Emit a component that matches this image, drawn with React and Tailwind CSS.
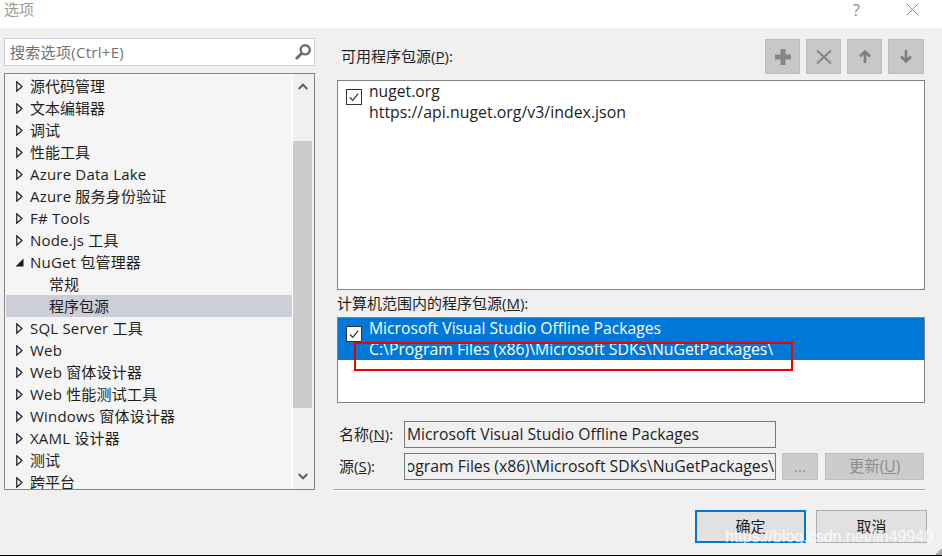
import React from "react";

const treeItems = [
  { label: "源代码管理" },
  { label: "文本编辑器" },
  { label: "调试" },
  { label: "性能工具" },
  { label: "Azure Data Lake" },
  { label: "Azure 服务身份验证" },
  { label: "F# Tools" },
  { label: "Node.js 工具" },
  { label: "NuGet 包管理器", open: true },
  { label: "常规", child: true },
  { label: "程序包源", child: true, selected: true },
  { label: "SQL Server 工具" },
  { label: "Web" },
  { label: "Web 窗体设计器" },
  { label: "Web 性能测试工具" },
  { label: "Windows 窗体设计器" },
  { label: "XAML 设计器" },
  { label: "测试" },
  { label: "跨平台" },
];

const Arrow = ({ open }) =>
  open ? (
    <svg width="9" height="9" viewBox="0 0 9 9" className="shrink-0">
      <path d="M8.5 0.5V8.5H0.5Z" fill="#1e1e1e" />
    </svg>
  ) : (
    <svg width="7" height="11" viewBox="0 0 7 11" className="shrink-0">
      <path d="M0.75 0.75V10.25L6 5.5Z" fill="none" stroke="#1e1e1e" strokeWidth="1.2" />
    </svg>
  );

const TreeRow = ({ item }) => (
  <div
    className={`h-[22px] shrink-0 flex items-center whitespace-nowrap text-[15px] text-[#1e1e1e] ${
      item.selected ? "bg-[#ccced9]" : ""
    } ${item.child ? "pl-[43px]" : item.open ? "pl-[9px]" : "pl-[10px]"} ${
      /[A-Za-z]/.test(item.label) ? "tracking-[0.2px]" : ""
    }`}
  >
    {!item.child && <Arrow open={item.open} />}
    <span className={item.child ? "" : item.open ? "ml-[6px]" : "ml-[7px]"}>{item.label}</span>
  </div>
);

const Check = () => (
  <div className="w-[16px] h-[16px] border border-[#333333] bg-white flex items-center justify-center shrink-0">
    <svg width="12" height="12" viewBox="0 0 12 12">
      <path d="M2 6.5L4.8 9.3L10.2 2.6" fill="none" stroke="#333333" strokeWidth="1.2" />
    </svg>
  </div>
);

const ToolButton = ({ wide, children }) => (
  <div
    className={`h-[35px] bg-[#c8c8c8] border border-[#bdbdbd] flex items-center justify-center ${
      wide ? "w-[36px]" : "w-[35px]"
    }`}
  >
    {children}
  </div>
);

const Underline = ({ children }) => <span className="underline">{children}</span>;

export default function App() {
  return (
    <div
      className="relative w-[942px] h-[556px] overflow-hidden bg-[#f0f0f0] flex flex-col text-[15px] text-[#1e1e1e] border-b border-black"
      style={{ fontFamily: '"Open Sans", "Noto Sans CJK SC", sans-serif' }}
    >
      {/* title bar */}
      <div className="h-[28px] shrink-0 bg-white flex items-center pl-[4px] pr-[23px] justify-between">
        <span className="text-[15px] text-[#999999] -mt-[10px]">选项</span>
        <div className="flex items-center gap-[46px] -mt-[9px]">
          <span className="text-[16px] text-[#8c8c8c]">?</span>
          <svg width="13" height="13" viewBox="0 0 13 13">
            <path d="M0.5 0.5L12.5 12.5M12.5 0.5L0.5 12.5" stroke="#8a8a8a" strokeWidth="1" />
          </svg>
        </div>
      </div>

      <div className="flex flex-1 min-h-0">
        {/* left column */}
        <div className="w-[311px] ml-[4px] pt-[10px] flex flex-col shrink-0">
          <div className="h-[28px] bg-white border border-[#ccceDB] flex items-center justify-between pl-[5px] pr-[2px] shrink-0">
            <span className="text-[15px] text-[#717171] tracking-[0.3px]">搜索选项(Ctrl+E)</span>
            <svg width="18" height="18" viewBox="0 0 18 18">
              <circle cx="11.2" cy="6.8" r="4.6" fill="none" stroke="#6e6e6e" strokeWidth="2.4" />
              <path d="M7.5 10.5L2 16" stroke="#6e6e6e" strokeWidth="3" />
            </svg>
          </div>
          <div className="mt-[7px] h-[417px] border border-[#82828c] bg-[#f5f5f5] flex overflow-hidden shrink-0">
            <div className="flex-1 min-w-0 flex flex-col pt-[1px] pl-[1px] overflow-hidden">
              {treeItems.map((item) => (
                <TreeRow key={item.label} item={item} />
              ))}
            </div>
            <div className="w-[22px] bg-[#f0f0f0] border-l border-white flex flex-col shrink-0">
              <div className="h-[67px] flex justify-center pt-[9px] pr-[2px]">
                <svg width="10" height="7" viewBox="0 0 10 7">
                  <path d="M0.7 6L5 1.7L9.3 6" fill="none" stroke="#606060" strokeWidth="2" />
                </svg>
              </div>
              <div className="h-[267px] bg-[#cccccc] mr-[2px]"></div>
              <div className="flex-1 flex justify-center items-end pb-[9px] pr-[2px]">
                <svg width="10" height="7" viewBox="0 0 10 7">
                  <path d="M0.7 1L5 5.3L9.3 1" fill="none" stroke="#606060" strokeWidth="2" />
                </svg>
              </div>
            </div>
          </div>
        </div>

        {/* right column */}
        <div className="flex-1 min-w-0 pl-[22px] pr-[17px] pt-[11px] flex flex-col">
          <div className="h-[41px] flex items-start justify-between pl-[4px] shrink-0">
            <span className="mt-[6px]">
              可用程序包源(<Underline>P</Underline>):
            </span>
            <div className="flex gap-[6px] mr-[1px]">
              <ToolButton>
                <svg width="16" height="16" viewBox="0 0 16 16">
                  <path d="M8 0V16M0 8H16" stroke="#858585" strokeWidth="5" />
                </svg>
              </ToolButton>
              <ToolButton>
                <svg width="16" height="14" viewBox="0 0 16 14">
                  <path d="M1 0.5L15 13.5M15 0.5L1 13.5" stroke="#858585" strokeWidth="2" />
                </svg>
              </ToolButton>
              <ToolButton>
                <svg width="12" height="13" viewBox="0 0 12 13">
                  <path d="M6 13V2M1 6.5L6 1.5L11 6.5" fill="none" stroke="#7f7f7f" strokeWidth="2.6" />
                </svg>
              </ToolButton>
              <ToolButton wide>
                <svg width="12" height="13" viewBox="0 0 12 13">
                  <path d="M6 0V11M1 6.5L6 11.5L11 6.5" fill="none" stroke="#7f7f7f" strokeWidth="2.6" />
                </svg>
              </ToolButton>
            </div>
          </div>
          <div className="h-[210px] border border-[#828282] bg-white flex pl-[8px] shrink-0">
            <div className="pt-[8px]">
              <Check />
            </div>
            <div className="ml-[7px] flex flex-col leading-[21px] text-[15.7px]">
              <span>nuget.org</span>
              <span className="text-[15.9px]">https://api.nuget.org/v3/index.json</span>
            </div>
          </div>
          <div className="h-[27px] flex items-center shrink-0">
            <span>
              计算机范围内的程序包源(<Underline>M</Underline>):
            </span>
          </div>
          <div className="h-[86px] border border-[#828282] bg-white shrink-0">
            <div className="h-[42px] bg-[#0078d7] text-white flex pl-[8px]">
              <div className="pt-[8px]">
                <Check />
              </div>
              <div className="ml-[7px] flex flex-col leading-[21px] text-[15.7px]">
                <span>Microsoft Visual Studio Offline Packages</span>
                <span className="text-[15.8px]">C:\Program Files (x86)\Microsoft SDKs\NuGetPackages\</span>
              </div>
            </div>
          </div>

          <div className="mt-[18px] flex items-center shrink-0">
            <span className="w-[67px] pl-[2px]">
              名称(<Underline>N</Underline>):
            </span>
            <div className="w-[372px] h-[27px] border border-[#7a7a7a] bg-[#f0f0f0] flex items-center pl-[2px] text-[15.7px]">
              Microsoft Visual Studio Offline Packages
            </div>
          </div>
          <div className="mt-[5px] flex items-center shrink-0">
            <span className="w-[67px] pl-[2px]">
              源(<Underline>S</Underline>):
            </span>
            <div className="w-[372px] h-[27px] border border-[#7a7a7a] bg-[#f0f0f0] flex items-center pl-[3px] pr-[1px]">
              <div className="flex-1 min-w-0 flex justify-end overflow-hidden whitespace-nowrap text-[15.8px]">
                C:\Program Files (x86)\Microsoft SDKs\NuGetPackages\
              </div>
            </div>
            <div className="ml-[6px] w-[36px] h-[27px] bg-[#cccccc] border border-[#bfbfbf] flex items-center justify-center text-[#8c8c8c]">
              ...
            </div>
            <div className="ml-[7px] w-[99px] h-[27px] bg-[#cccccc] border border-[#bfbfbf] flex items-center justify-center text-[#8c8c8c] text-[15.5px]">
              更新(<Underline>U</Underline>)
            </div>
          </div>
          <div className="mt-[9px] -ml-[4px] h-[1px] bg-[#a0a0a0] border-b border-white shrink-0 box-content"></div>

          <div className="mt-[19px] flex justify-end gap-[10px] -mr-[2px] shrink-0">
            <div className="w-[111px] h-[33px] bg-[#e1e1e1] border-2 border-[#0078d7] flex items-center justify-center">
              确定
            </div>
            <div className="w-[111px] h-[33px] bg-[#e1e1e1] border border-[#adadad] flex items-center justify-center">
              取消
            </div>
          </div>
        </div>
      </div>

      {/* resize grip */}
      <svg width="6" height="6" viewBox="0 0 6 6" className="absolute right-0 bottom-0">
        <path d="M4 0H6V2H4ZM2 2H4V4H2ZM4 2H6V4H4ZM0 4H2V6H0ZM2 4H4V6H2ZM4 4H6V6H4Z" fill="#a8a8a8" />
      </svg>

      {/* red annotation drawn over the screenshot */}
      <div className="absolute left-[354px] top-[342px] w-[439px] h-[29px] border-2 border-[#f00000]"></div>
      {/* csdn watermark */}
      <div
        className="absolute left-[725px] top-[527px] text-[16px] leading-[20px] text-white/60 whitespace-nowrap [text-shadow:0_0_1px_rgba(255,255,255,0.5)]"
        style={{ fontFamily: '"Liberation Sans", sans-serif' }}
      >
        https://blog.csdn.net/lin49940
      </div>
    </div>
  );
}
